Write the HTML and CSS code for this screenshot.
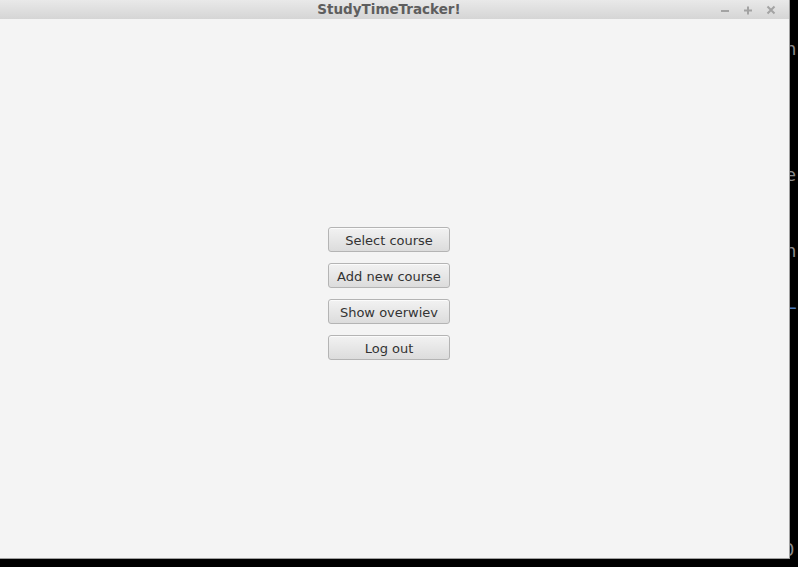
FILE: index.html
```html
<!DOCTYPE html>
<html>
<head>
<meta charset="utf-8">
<link rel="stylesheet" href="styles.css">
</head>
<body>
<div class="desktop">
  <span class="peek p1">n</span>
  <span class="peek p2">e</span>
  <span class="peek p3">n</span>
  <span class="peek p4">L</span>
  <span class="peek p5">0</span>
  <div class="window">
    <div class="titlebar">
      <div class="title">StudyTimeTracker!</div>
      <div class="controls">
        <svg class="ctl" width="10" height="10" viewBox="0 0 10 10"><path d="M1 6h8" stroke="#a3a3a3" stroke-width="2"/></svg>
        <svg class="ctl" width="10" height="10" viewBox="0 0 10 10"><path d="M1 5.5h8M5 1.5v8" stroke="#a3a3a3" stroke-width="2"/></svg>
        <svg class="ctl" width="10" height="10" viewBox="0 0 10 10"><path d="M1.5 1.5l7 7M8.5 1.5l-7 7" stroke="#a3a3a3" stroke-width="2"/></svg>
      </div>
    </div>
    <div class="content">
      <div class="menu">
        <button class="btn">Select course</button>
        <button class="btn">Add new course</button>
        <button class="btn">Show overwiev</button>
        <button class="btn">Log out</button>
      </div>
    </div>
  </div>
</div>
</body>
</html>
```
FILE: styles.css
```css
html, body {
  margin: 0;
  padding: 0;
  background: #000;
  width: 798px;
  height: 567px;
  overflow: hidden;
}
.desktop {
  position: relative;
  width: 798px;
  height: 567px;
  background: #000;
  font-family: "DejaVu Sans", sans-serif;
}
.peek {
  position: absolute;
  font-size: 18px;
  color: #8a8a8a;
}
.p1 { left: 785px; top: 38px; }
.p2 { left: 785px; top: 164px; }
.p3 { left: 785px; top: 240px; }
.p4 { left: 786px; top: 292px; color: #4a7ab8; }
.p5 { left: 783px; top: 539px; color: #8a8a8a; }
.window {
  position: relative;
  width: 790px;
  height: 559px;
  background: #f4f4f4;
  border-right: 1px solid #a0a0a0;
  border-bottom: 1px solid #a0a0a0;
  box-sizing: border-box;
  display: flex;
  flex-direction: column;
}
.titlebar {
  height: 19px;
  background: linear-gradient(#e9e9e9, #d5d5d5);
  position: relative;
  display: flex;
  align-items: center;
  justify-content: center;
  padding-right: 11px;
}
.title {
  font-family: "DejaVu Sans", sans-serif;
  font-weight: bold;
  font-size: 13.5px;
  color: #5e5e5e;
  line-height: 19px;
}
.controls {
  position: absolute;
  right: 13px;
  top: 0;
  height: 19px;
  display: flex;
  align-items: center;
  gap: 13px;
}
.ctl {
  display: block;
}
.content {
  flex: 1;
  display: flex;
  justify-content: center;
  padding-top: 208px;
  padding-right: 11px;
}
.menu {
  display: flex;
  flex-direction: column;
  gap: 11px;
}
.btn {
  width: 122px;
  height: 25px;
  margin: 0;
  padding: 1px 0 0;
  border: 1px solid #b4b4b4;
  border-radius: 3px;
  background: linear-gradient(#f2f2f2, #dcdcdc);
  font-family: "DejaVu Sans", sans-serif;
  font-size: 13px;
  color: #333;
  box-shadow: inset 0 1px 0 #fbfbfb;
}
```
